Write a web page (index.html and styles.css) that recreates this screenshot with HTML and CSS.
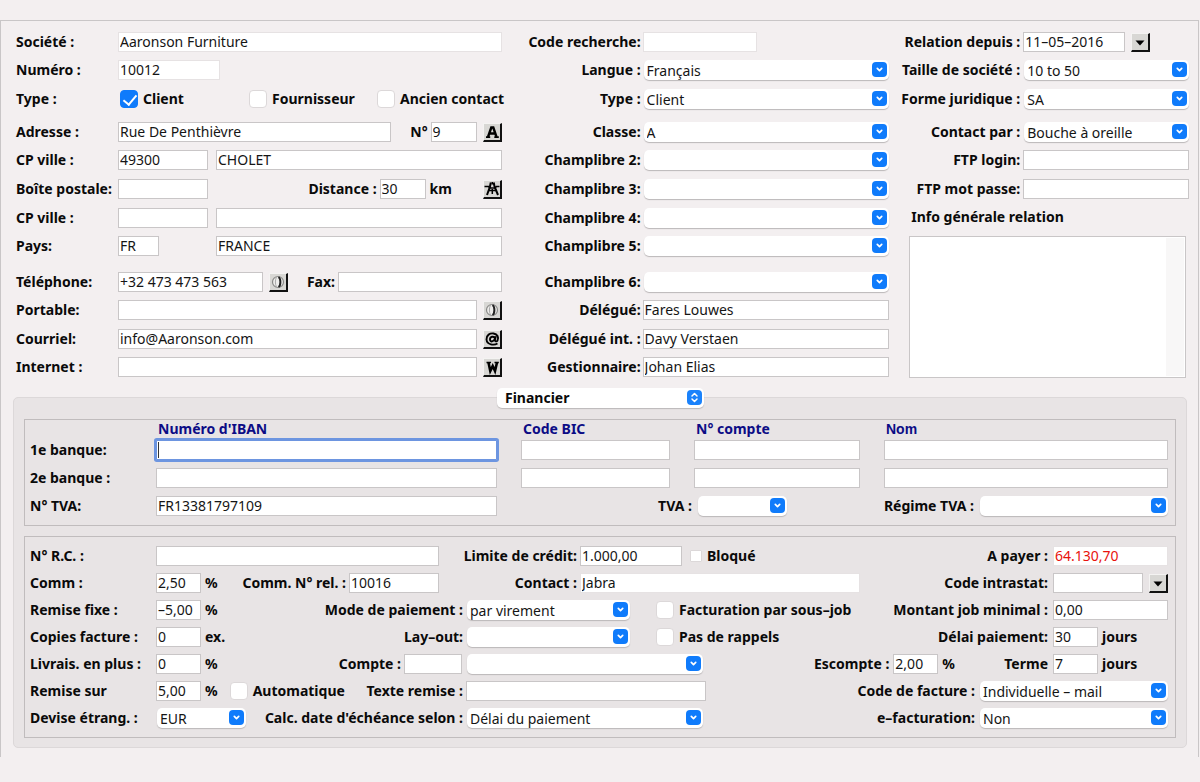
FILE: index.html
```html
<!DOCTYPE html>
<html lang="fr">
<head>
<meta charset="utf-8">
<title>Fiche relation</title>
<link rel="stylesheet" href="styles.css">
</head>
<body>
<svg class="defs" aria-hidden="true">
  <symbol id="chev" viewBox="0 0 15 15"><rect width="15" height="15" rx="4" fill="#0f7bfb"/><path d="M5.300 6.400 7.500 8.600 9.700 6.400" fill="none" stroke="#fff" stroke-width="1.700" stroke-linecap="round" stroke-linejoin="round"/></symbol>
  <symbol id="updown" viewBox="0 0 15 15"><rect width="15" height="15" rx="4" fill="#1a82fb"/><path d="M5 6 7.500 3.500 10 6M5 9 7.500 11.500 10 9" fill="none" stroke="#fff" stroke-width="1.500" stroke-linecap="round" stroke-linejoin="round"/></symbol>
  <symbol id="down" viewBox="0 0 16 16"><path d="M3.500 6.500h9L8 11.500z" fill="#000"/></symbol>
  <symbol id="phone" viewBox="0 0 16 16"><circle cx="8" cy="8" r="5.500" fill="#eeedeb" stroke="#8a8a88" stroke-width="1.200"/><path d="M6.500 3c-1.500 3-1.500 7 0 10" fill="none" stroke="#aaa" stroke-width="1"/><path d="M8.500 3c2.500 1.500 2.500 8.500 0 10" fill="none" stroke="#222" stroke-width="2"/></symbol>
  <symbol id="letter-a" viewBox="0 0 16 16"><path d="M4 13 7.300 3.500h2L12.500 13M5.500 9.500h6" fill="none" stroke="#000" stroke-width="2.400"/><path d="M2 13.200h4.200M10.300 13.200h4.500" stroke="#000" stroke-width="1.700"/></symbol>
  <symbol id="road" viewBox="0 0 16 16"><path d="M6.800 1.500 6 5.500 3 14M9.700 1.500l.8 4L14 14" fill="none" stroke="#000" stroke-width="2"/><path d="M.5 5.500h4l2 1.500h4l2-1.500h3M4.500 9.500 12 9.500" fill="none" stroke="#000" stroke-width="1.700"/><path d="M8.300 1v2.500M8.300 8v5" stroke="#000" stroke-width="1.500"/></symbol>
  <symbol id="at" viewBox="0 0 16 16"><path d="M13.500 12.500C10 14.500 3 14 2.500 8.500 2.300 4 6 2 9.500 2.500c4 .5 5.500 4 4 7-.8 1.500-3 1-2.500-.7l.8-3.600M11 7.500C10 4.500 6 5.500 6 8.500s4 2.500 5-1" fill="none" stroke="#000" stroke-width="1.900"/></symbol>
  <symbol id="letter-w" viewBox="0 0 16 16"><path d="M4.500 3.500 6.300 12 8.700 7 11 12l2-8.500" fill="none" stroke="#000" stroke-width="2.600"/><path d="M2.500 3.500H7M10.500 3.500h4.300" stroke="#000" stroke-width="1.700"/></symbol>
</svg>
<form class="window">
  <div class="relation">
    <section class="column left">
      <div class="row"><label class="name" for="societe">Société :</label><input class="grow plain" id="societe" value="Aaronson Furniture"></div>
      <div class="row"><label class="name" for="numero">Numéro :</label><input class="w102 plain" id="numero" value="10012"></div>
      <div class="row"><span class="name">Type :</span>
        <div class="checks grow"><label class="check"><input type="checkbox" checked>Client</label><label class="check"><input type="checkbox">Fournisseur</label><label class="check"><input type="checkbox">Ancien contact</label></div></div>
      <div class="row"><label class="name" for="adresse">Adresse :</label><input class="grow" id="adresse" value="Rue De Penthièvre"><label class="mid-label number" for="no">N°</label><input class="w46" id="no" value="9"><button class="tool" type="button" aria-label="Adresse"><svg><use href="#letter-a"/></svg></button></div>
      <div class="row"><label class="name" for="cp">CP ville :</label><input class="w90" id="cp" value="49300"><input class="grow second" aria-label="Ville" value="CHOLET"></div>
      <div class="row"><label class="name" for="boite">Boîte postale:</label><input class="w90" id="boite"><label class="mid-label grow" for="distance">Distance :</label><input class="w46" id="distance" value="30"><span class="unit km">km</span><button class="tool" type="button" aria-label="Itinéraire"><svg><use href="#road"/></svg></button></div>
      <div class="row"><label class="name" for="cp2">CP ville :</label><input class="w90" id="cp2"><input class="grow second" aria-label="Ville postale"></div>
      <div class="row"><label class="name" for="pays">Pays:</label><span class="w90"><input class="w41" id="pays" value="FR"></span><input class="grow second" aria-label="Nom du pays" value="FRANCE"></div>
      <div class="row"><label class="name" for="tel">Téléphone:</label><input class="w145" id="tel" value="+32 473 473 563"><button class="tool" type="button" aria-label="Appeler"><svg><use href="#phone"/></svg></button><label class="mid-label fax" for="fax">Fax:</label><input class="grow" id="fax"></div>
      <div class="row"><label class="name" for="portable">Portable:</label><input class="grow" id="portable"><button class="tool" type="button" aria-label="Appeler le portable"><svg><use href="#phone"/></svg></button></div>
      <div class="row"><label class="name" for="courriel">Courriel:</label><input class="grow" id="courriel" value="info@Aaronson.com"><button class="tool" type="button" aria-label="Envoyer un courriel"><svg><use href="#at"/></svg></button></div>
      <div class="row"><label class="name" for="internet">Internet :</label><input class="grow" id="internet"><button class="tool" type="button" aria-label="Ouvrir le site"><svg><use href="#letter-w"/></svg></button></div>
    </section>

    <section class="column middle">
      <div class="row"><label class="name" for="code">Code recherche:</label><input class="w114 plain" id="code"></div>
      <div class="row"><label class="name" for="langue">Langue :</label><span class="combo grow"><select id="langue"><option>Français</option></select><svg><use href="#chev"/></svg></span></div>
      <div class="row"><label class="name" for="type">Type :</label><span class="combo grow"><select id="type"><option>Client</option></select><svg><use href="#chev"/></svg></span></div>
      <div class="row"><label class="name" for="classe">Classe:</label><span class="combo grow"><select id="classe"><option>A</option></select><svg><use href="#chev"/></svg></span></div>
      <div class="row"><label class="name" for="c2">Champlibre 2:</label><span class="combo grow"><select id="c2"></select><svg><use href="#chev"/></svg></span></div>
      <div class="row"><label class="name" for="c3">Champlibre 3:</label><span class="combo grow"><select id="c3"></select><svg><use href="#chev"/></svg></span></div>
      <div class="row"><label class="name" for="c4">Champlibre 4:</label><span class="combo grow"><select id="c4"></select><svg><use href="#chev"/></svg></span></div>
      <div class="row"><label class="name" for="c5">Champlibre 5:</label><span class="combo grow"><select id="c5"></select><svg><use href="#chev"/></svg></span></div>
      <div class="row"><label class="name" for="c6">Champlibre 6:</label><span class="combo grow"><select id="c6"></select><svg><use href="#chev"/></svg></span></div>
      <div class="row"><label class="name" for="delegue">Délégué:</label><input class="grow" id="delegue" value="Fares Louwes"></div>
      <div class="row"><label class="name" for="delegue-int">Délégué int. :</label><input class="grow" id="delegue-int" value="Davy Verstaen"></div>
      <div class="row"><label class="name" for="gestionnaire">Gestionnaire:</label><input class="grow" id="gestionnaire" value="Johan Elias"></div>
    </section>

    <section class="column right">
      <div class="row"><label class="name" for="depuis">Relation depuis :</label><input class="w102" id="depuis" value="11–05–2016"><button class="tool" type="button" aria-label="Choisir la date"><svg><use href="#down"/></svg></button></div>
      <div class="row"><label class="name" for="taille">Taille de société :</label><span class="combo grow"><select id="taille"><option>10 to 50</option></select><svg><use href="#chev"/></svg></span></div>
      <div class="row"><label class="name" for="forme">Forme juridique :</label><span class="combo grow"><select id="forme"><option>SA</option></select><svg><use href="#chev"/></svg></span></div>
      <div class="row"><label class="name" for="contact-par">Contact par :</label><span class="combo grow"><select id="contact-par"><option>Bouche à oreille</option></select><svg><use href="#chev"/></svg></span></div>
      <div class="row"><label class="name" for="ftp">FTP login:</label><input class="grow" id="ftp"></div>
      <div class="row"><label class="name" for="ftp-pass">FTP mot passe:</label><input class="grow" id="ftp-pass"></div>
      <label class="info-label" for="info">Info générale relation</label>
      <textarea class="info" id="info"></textarea>
    </section>
  </div>

  <section class="panel">
    <span class="combo tab"><select aria-label="Onglet"><option>Financier</option></select><svg><use href="#updown"/></svg></span>

    <div class="box bank">
      <span class="head iban-head">Numéro d'IBAN</span><span class="head">Code BIC</span><span class="head">N° compte</span><span class="head arial">Nom</span>
      <label for="iban1">1e banque:</label><input class="focused" id="iban1"><input aria-label="Code BIC 1"><input aria-label="N° compte 1"><input aria-label="Nom 1">
      <label for="iban2">2e banque :</label><input id="iban2"><input aria-label="Code BIC 2"><input aria-label="N° compte 2"><input aria-label="Nom 2">
      <label for="tva-no">N° TVA:</label><input id="tva-no" value="FR13381797109">
      <div class="row vat"><label class="vat-label" for="tva">TVA :</label><span class="combo w90"><select id="tva"></select><svg><use href="#chev"/></svg></span><label class="push" for="regime">Régime TVA :</label><span class="combo w189"><select id="regime"></select><svg><use href="#chev"/></svg></span></div>
    </div>

    <div class="box finance">
      <div class="row a"><label class="name" for="rc">N° R.C. :</label><input class="grow" id="rc"></div>
      <div class="row b"><label class="name" for="limite">Limite de crédit:</label><input class="w102" id="limite" value="1.000,00"><label class="check small"><input type="checkbox">Bloqué</label></div>
      <div class="row c"><label class="push" for="payer">A payer :</label><span class="field-area"><input class="grow plain due" id="payer" value="64.130,70"></span></div>

      <div class="row a"><label class="name" for="comm">Comm :</label><input class="w45" id="comm" value="2,50"><span class="unit">%</span><label class="push" for="rel">Comm. N° rel. :</label><input class="w90" id="rel" value="10016"></div>
      <div class="row b"><label class="name" for="contact">Contact :</label><input class="grow plain" id="contact" value="Jabra"></div>
      <div class="row c"><label class="push" for="intrastat">Code intrastat:</label><span class="field-area"><input class="grow" id="intrastat"><button class="tool" type="button" aria-label="Choisir le code"><svg><use href="#down"/></svg></button></span></div>

      <div class="row a wide"><label class="name" for="fixe">Remise fixe :</label><input class="w45" id="fixe" value="–5,00"><span class="unit">%</span><label class="push" for="mode">Mode de paiement :</label></div>
      <div class="row b inset"><span class="combo w164"><select id="mode"><option>par virement</option></select><svg><use href="#chev"/></svg></span><label class="check after-combo"><input type="checkbox">Facturation par sous–job</label></div>
      <div class="row c"><label class="push" for="montant">Montant job minimal :</label><span class="field-area"><input class="grow" id="montant" value="0,00"></span></div>

      <div class="row a wide"><label class="name" for="copies">Copies facture :</label><input class="w45" id="copies" value="0"><span class="unit">ex.</span><label class="push" for="layout">Lay–out:</label></div>
      <div class="row b inset"><span class="combo w164"><select id="layout"></select><svg><use href="#chev"/></svg></span><label class="check after-combo"><input type="checkbox">Pas de rappels</label></div>
      <div class="row c"><label class="push" for="delai">Délai paiement:</label><span class="field-area"><input class="w45" id="delai" value="30"><span class="unit">jours</span></span></div>

      <div class="row a wide"><label class="name" for="livrais">Livrais. en plus :</label><input class="w45" id="livrais" value="0"><span class="unit">%</span><label class="push" for="compte">Compte :</label><input class="w58" id="compte"></div>
      <div class="row bc inset"><span class="combo w237"><select aria-label="Nom du compte"></select><svg><use href="#chev"/></svg></span><label class="push" for="escompte">Escompte :</label><input class="w45" id="escompte" value="2,00"><span class="unit">%</span><label class="terme" for="terme">Terme</label><span class="field-area"><input class="w45" id="terme" value="7"><span class="unit">jours</span></span></div>

      <div class="row a wide"><label class="name" for="remise">Remise sur</label><input class="w45" id="remise" value="5,00"><span class="unit">%</span><label class="check auto"><input type="checkbox">Automatique</label><label class="push" for="texte">Texte remise :</label></div>
      <div class="row bc inset"><input class="w240" id="texte"><label class="push" for="facture">Code de facture :</label><span class="combo w189"><select id="facture"><option>Individuelle – mail</option></select><svg><use href="#chev"/></svg></span></div>

      <div class="row a wide"><label class="name" for="devise">Devise étrang. :</label><span class="combo w90"><select id="devise"><option>EUR</option></select><svg><use href="#chev"/></svg></span><label class="push" for="calc">Calc. date d'échéance selon :</label></div>
      <div class="row bc inset"><span class="combo w237"><select id="calc"><option>Délai du paiement</option></select><svg><use href="#chev"/></svg></span><label class="push" for="efact">e–facturation:</label><span class="combo w189"><select id="efact"><option>Non</option></select><svg><use href="#chev"/></svg></span></div>
    </div>
  </section>
</form>
</body>
</html>
```
FILE: styles.css
```css
* { box-sizing: border-box; }

body {
  margin: 0;
  padding: 20px 1px 0 0;
  background: #f3eff0;
  color: #0a0a0a;
  font: bold 14px/18px "Noto Sans", "Open Sans", sans-serif;
}

.defs { position: absolute; width: 0; height: 0; }

.window {
  border: 1px solid #c9c6c7;
  border-bottom: 0;
  padding: 11px 9px 9px 12px;
}

label, .name, .unit, .head { white-space: nowrap; }

input, select, textarea {
  margin: 0;
  min-width: 0;
  color: #151515;
  font: 14px/18px "Noto Sans", "Open Sans", sans-serif;
}

input {
  height: 20px;
  padding: 0 1px 1px;
  border: 1px solid #c9c6c7;
  border-radius: 0;
  background: #fff;
  outline: 0;
}

.plain { border-color: #e6e2e3; }
.due { color: #e8120c; }

/* Relation header: three columns sharing one row rhythm */
.relation {
  display: grid;
  grid-template-columns: 486fr 378fr 290fr;
  gap: 10px;
  padding-left: 3px;
}

.column {
  display: grid;
  grid-template-rows: 28px 29px 33px 28px 29px 29px 28px 36px 28px 29px 28px 21px;
  min-width: 0;
}

.row {
  display: flex;
  align-items: center;
  height: 20px;
  min-width: 0;
}

.grow { flex: 1; width: 0; }
.row > *, .field-area > * { flex-shrink: 0; }

.left .name { width: 102px; }
.middle .name { width: 131px; padding-right: 2px; text-align: right; }
.right .name { width: 124px; padding-right: 3px; text-align: right; }

.w41 { width: 41px; }
.w45 { width: 45px; }
.w46 { width: 46px; }
.w58 { width: 58px; }
.w90 { width: 90px; }
.w102 { width: 102px; }
.w114 { width: 114px; }
.w145 { width: 145px; }
.w164 { width: 164px; }
.w189 { width: 189px; }
.w237 { width: 237px; }
.w240 { width: 240px; }

.second { margin-left: 8px; }
.mid-label { padding: 0 3px; text-align: right; }
.number { width: 40px; }
.fax { width: 50px; }
.unit { padding-left: 4px; }
.km { width: 51px; }

/* Check boxes */
.checks { display: grid; grid-template-columns: 129px 128px 1fr; padding-left: 2px; }
.check { display: flex; align-items: center; gap: 5px; }

.check input {
  appearance: none;
  width: 18px;
  height: 18px;
  padding: 0;
  border: 1px solid #dcd8d9;
  border-radius: 4px;
}

.check input:checked {
  border-color: #0f7bfb;
  background: #0f7bfb;
  position: relative;
}

.check input:checked::after {
  content: "";
  position: absolute;
  left: 5px;
  top: 1px;
  width: 6px;
  height: 11px;
  border: solid #fff;
  border-width: 0 2px 2px 0;
  transform: rotate(40deg);
}

.small { padding-left: 8px; }
.small input { width: 12px; height: 12px; border-radius: 1px; }
.after-combo { padding-left: 26px; }
.auto { padding-left: 12px; }

/* Drop-downs */
.combo { display: block; position: relative; height: 20px; padding-left: 1px; }

.combo select {
  appearance: none;
  display: block;
  width: 100%;
  height: 20px;
  padding: 1px 20px 0 3px;
  border: 0;
  border-radius: 5px;
  background: #fff;
  box-shadow: 0 1px 1px #bbb7b8;
  outline: 0;
}

.combo svg {
  position: absolute;
  right: 2px;
  top: 2px;
  width: 15px;
  height: 15px;
  pointer-events: none;
}

/* Bevelled tool buttons */
.tool {
  width: 19px;
  height: 19px;
  margin-left: 6px;
  padding: 0;
  border: 1px solid #f4f3f2;
  border-right: 2px solid #111;
  border-bottom: 2px solid #111;
  background: #d8d7d4;
}

.tool svg { display: block; width: 16px; height: 16px; }

.info-label { padding-left: 12px; }

.info {
  grid-row: 8 / 13;
  margin: 0 3px 0 10px;
  border: 1px solid #c9c6c7;
  background: linear-gradient(#f8f7f7, #f8f7f7) right 1px top 1px / 18px 138px no-repeat #fff;
  resize: none;
  outline: 0;
}

/* Financial panel */
.panel {
  margin-top: 19px;
  padding: 0 10px 9px;
  border: 1px solid #dcd8d9;
  border-radius: 5px;
  background: #e8e4e5;
  margin-right: 2px;
}

.tab { width: 208px; margin: -10px auto 11px; }
.tab select { padding: 0 20px 0 8px; font-weight: bold; color: #0a0a0a; }

.box { border: 1px solid #c0bcbd; padding: 0 7px 0 5px; }

.bank {
  display: grid;
  grid-template-columns: 102px 341fr 149fr 166fr 284fr;
  grid-template-rows: 12px repeat(3, 20px);
  gap: 8px 24px;
  padding-bottom: 9px;
  align-items: center;
}

.bank > input { width: 100%; }
.head { align-self: start; padding-left: 2px; color: #0c0c85; }
.iban-head { grid-column: 2; }
.arial { font-family: "Liberation Sans", Arial, sans-serif; }

.focused {
  border-color: #6d95e0;
  border-radius: 1px;
  box-shadow: 0 0 0 2px #6d95e0;
  background: linear-gradient(#333, #333) 1px 1px / 1px 16px no-repeat #fff;
}

.vat { grid-column: 3 / 6; }
.vat-label { width: 176px; padding-right: 5px; text-align: right; }
.push { flex: 1; padding-right: 5px; text-align: right; }

.finance {
  display: grid;
  grid-template-columns: 433fr 405fr 300fr;
  gap: 7px 0;
  margin-top: 10px;
  padding-top: 9px;
  padding-bottom: 9px;
}

.a { padding-right: 24px; }
.a .name { width: 126px; }
.a .push { padding-right: 3px; }
.wide { padding-right: 0; }
.wide .push { padding-right: 0; }
.wide #compte { margin: 0 1px 0 3px; }
.b .name { width: 117px; padding-right: 3px; text-align: right; }
.b #contact { margin-right: 8px; }
.bc { grid-column: 2 / 4; }
.bc .push { padding-right: 4px; }
.inset { padding-left: 3px; }
.field-area { display: flex; align-items: center; width: 115px; }
.terme { width: 98px; padding-right: 5px; text-align: right; }
```
